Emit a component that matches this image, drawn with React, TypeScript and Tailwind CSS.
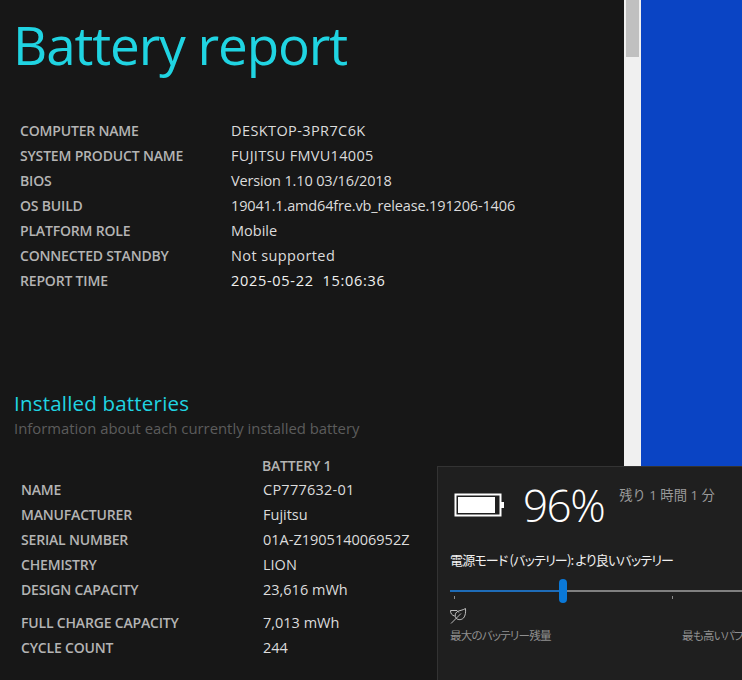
import React from 'react';

const systemRows = [
  ['COMPUTER NAME', 'DESKTOP-3PR7C6K', 'tracking-[0.4px]'],
  ['SYSTEM PRODUCT NAME', 'FUJITSU FMVU14005', 'tracking-[0.3px]'],
  ['BIOS', 'Version 1.10 03/16/2018', 'tracking-[-0.15px]'],
  ['OS BUILD', '19041.1.amd64fre.vb_release.191206-1406', 'tracking-[-0.15px]'],
  ['PLATFORM ROLE', 'Mobile', ''],
  ['CONNECTED STANDBY', 'Not supported', 'tracking-[0.4px]'],
  ['REPORT TIME', '2025-05-22  15:06:36', 'font-medium tracking-[0.7px] text-[#f0f0f0]'],
];

const batteryRows = [
  ['NAME', 'CP777632-01', 'tracking-[0.25px]'],
  ['MANUFACTURER', 'Fujitsu', ''],
  ['SERIAL NUMBER', '01A-Z190514006952Z', ''],
  ['CHEMISTRY', 'LION', ''],
  ['DESIGN CAPACITY', '23,616 mWh', ''],
];

const Row = ({ label, value, labelWidth, valueClass }: { label: string; value: string; labelWidth: string; valueClass?: string }) => (
  <div className="flex h-[25px] items-center">
    <div className={`${labelWidth} shrink-0 text-[14px] font-semibold tracking-[-0.18px] text-[#b4b4b4]`}>{label}</div>
    <div className={`text-[14.5px] whitespace-pre text-[#dcdcdc] ${valueClass || ''}`}>{value}</div>
  </div>
);

const BatteryIcon = () => (
  <svg width="50" height="26" viewBox="0 0 50 26" className="shrink-0">
    <rect x="1.5" y="2.5" width="45" height="21" fill="none" stroke="#fff" strokeWidth="2" />
    <rect x="4" y="5" width="37" height="16" fill="#fff" />
    <rect x="47" y="10" width="3" height="6" fill="#fff" />
  </svg>
);

const LeafIcon = () => (
  <svg width="17" height="16" viewBox="0 0 17 16" fill="none" stroke="#bdbdbd" strokeWidth="1">
    <path d="M.5 2.500h6.500c.8 1 1.300 1.400 1.800 2" />
    <path d="M.5 2.500c0 3 1.300 4.800 4.300 5.600" />
    <path d="M15.500 .5c-3 2-6 1.700-8.500 3.300-2 1.500-2.500 4.500-.8 6.500 2 2 5.300 1.700 7.300-.3 2-2.200 2.300-6 2-9.500z" />
    <path d="M1 15.500L11 5.500" />
  </svg>
);

const PowerFlyout = () => (
  <div className="absolute left-[437px] top-[466px] h-[240px] w-[340px] border border-[#333333] bg-[#1f1f1f]" style={{ fontFamily: '"Open Sans", "Noto Sans CJK JP", sans-serif' }}>
    <div className="flex items-start pl-4 pt-[14px]">
      <div className="mt-[11px]"><BatteryIcon /></div>
      <div className="ml-[19px] text-[44px] leading-[48px] font-light tracking-[-1.5px] text-white">96%</div>
      <div className="ml-[15px] mt-[5px] text-[13.3px] leading-[18px] text-[#9a9a9a]">残り 1 時間 1 分</div>
    </div>
    <div className="mt-[21px] pl-3 text-[13px] leading-[20px] tracking-[-0.8px] text-[#f0f0f0] [font-feature-settings:'palt']" style={{ fontFamily: '"Noto Sans CJK JP", sans-serif' }}>電源モード (バッテリー): より良いバッテリー</div>
    <div className="relative mt-[9px] ml-3 h-[24px]">
      <div className="absolute left-0 top-[11px] h-[2px] w-[113px] bg-[#1e6cb8]" />
      <div className="absolute left-[113px] top-[11px] h-[2px] w-[220px] bg-[#808080]" />
      <div className="absolute left-[109px] top-0 h-[24px] w-[8px] rounded-full bg-[#0a78d7]" />
      <div className="absolute left-[4px] top-[17px] h-[3px] w-px bg-[#8a8a8a]" />
      <div className="absolute left-[222px] top-[17px] h-[3px] w-px bg-[#8a8a8a]" />
    </div>
    <div className="ml-3 mt-[5px]"><LeafIcon /></div>
    <div className="mt-[3px] flex pl-3 text-[11.5px] leading-[16px] tracking-[-0.75px] text-[#8f8f8f] [font-feature-settings:'palt']" style={{ fontFamily: '"Noto Sans CJK JP", sans-serif' }}>
      <span className="w-[232px] shrink-0">最大のバッテリー残量</span>
      <span className="whitespace-nowrap">最も高いパフォーマンス</span>
    </div>
  </div>
);

export default function App() {
  return (
    <div className="relative flex h-[680px] w-[742px] overflow-hidden" style={{ fontFamily: '"Open Sans", sans-serif' }}>
      {/* report page */}
      <div className="w-[624px] shrink-0 bg-[#171717]">
        <h1 className="pl-[13px] pt-[11px] text-[53px] leading-[68px] tracking-[-1.1px] text-[#20d4e2]">Battery report</h1>
        <div className="mt-[39px] pl-5">
          {systemRows.map(([label, value, valueClass]) => (
            <Row key={label} label={label} value={value} valueClass={valueClass} labelWidth="w-[211px]" />
          ))}
        </div>
        <h2 className="mt-[97px] pl-[14px] text-[20.5px] leading-[26px] font-medium tracking-[0.2px] text-[#20d4e2]">Installed batteries</h2>
        <p className="mt-[2px] pl-[14px] text-[14.85px] leading-[20px] text-[#5c5c5c]">Information about each currently installed battery</p>
        <div className="mt-[15px] flex h-[24px] items-center pl-[262px] text-[14px] font-semibold tracking-[-0.18px] text-[#b4b4b4]">BATTERY 1</div>
        <div className="pl-[21px]">
          {batteryRows.map(([label, value, valueClass]) => (
            <Row key={label} label={label} value={value} valueClass={valueClass} labelWidth="w-[242px]" />
          ))}
          <div className="h-2" />
          <Row label="FULL CHARGE CAPACITY" value="7,013 mWh" labelWidth="w-[242px]" />
          <Row label="CYCLE COUNT" value="244" labelWidth="w-[242px]" />
        </div>
      </div>
      {/* scrollbar */}
      <div className="w-[17px] shrink-0 bg-[#f0f0f0] px-[2px]">
        <div className="h-[57px] bg-[#c0c0c0]" />
      </div>
      {/* desktop */}
      <div className="flex-1 bg-[#0a44c4]" />
      <PowerFlyout />
    </div>
  );
}
